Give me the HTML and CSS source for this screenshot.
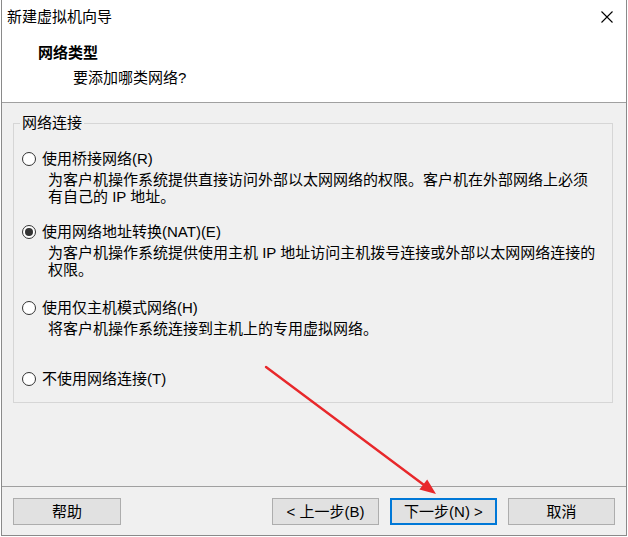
FILE: index.html
```html
<!DOCTYPE html>
<html lang="zh-CN">
<head>
<meta charset="utf-8">
<title>新建虚拟机向导</title>
<link rel="stylesheet" href="styles.css">
</head>
<body>
<div class="window">
  <div class="titlebar">
    <span class="title">新建虚拟机向导</span>
    <svg class="close" width="12" height="12" viewBox="0 0 12 12"><path d="M0.5 0.5 L11.5 11.5 M11.5 0.5 L0.5 11.5" stroke="#000" stroke-width="1.1" fill="none"/></svg>
  </div>
  <div class="header">
    <div class="h-title">网络类型</div>
    <div class="h-sub">要添加哪类网络?</div>
  </div>
  <div class="content">
    <fieldset class="group">
      <legend>网络连接</legend>
      <div class="option opt1">
        <div class="label"><span class="radio"></span>使用桥接网络(R)</div>
        <div class="desc">
          <div class="line">为客户机操作系统提供直接访问外部以太网网络的权限。客户机在外部网络上必须</div>
          <div class="line">有自己的 IP 地址。</div>
        </div>
      </div>
      <div class="option opt2">
        <div class="label"><span class="radio checked"></span>使用网络地址转换(NAT)(E)</div>
        <div class="desc">
          <div class="line">为客户机操作系统提供使用主机 IP 地址访问主机拨号连接或外部以太网网络连接的</div>
          <div class="line">权限。</div>
        </div>
      </div>
      <div class="option opt3">
        <div class="label"><span class="radio"></span>使用仅主机模式网络(H)</div>
        <div class="desc">
          <div class="line">将客户机操作系统连接到主机上的专用虚拟网络。</div>
        </div>
      </div>
      <div class="option opt4">
        <div class="label"><span class="radio"></span>不使用网络连接(T)</div>
      </div>
    </fieldset>
  </div>
  <div class="footer">
    <button class="btn help">帮助</button>
    <button class="btn">&lt; 上一步(B)</button>
    <button class="btn default">下一步(N) &gt;</button>
    <button class="btn">取消</button>
  </div>
</div>
<svg class="arrow" width="628" height="537" viewBox="0 0 628 537">
  <line x1="266" y1="367" x2="426" y2="486.5" stroke="#e8282b" stroke-width="2.4" stroke-linecap="round"/>
  <polygon points="436,494 419.4,489.6 427.2,479.4" fill="#e8282b"/>
</svg>
</body>
</html>
```
FILE: styles.css
```css
html, body {
  margin: 0;
  padding: 0;
  background: #ffffff;
  width: 628px;
  height: 537px;
  overflow: hidden;
  font-family: "Liberation Sans", "Noto Sans CJK SC", sans-serif;
  font-size: 15px;
  color: #000;
}

.window {
  margin-left: 1px;
  width: 626px;
  height: 536px;
  box-sizing: border-box;
  border: 1px solid #8a8a8a;
  border-top: none;
  display: flex;
  flex-direction: column;
  background: #f0f0f0;
}

.titlebar {
  height: 34px;
  flex: none;
  background: #fff;
  display: flex;
  align-items: center;
  justify-content: space-between;
  padding: 0 13px 0 5px;
}

.title {
  line-height: 20px;
}

.close {
  display: block;
}

.header {
  flex: none;
  height: 69px;
  box-sizing: border-box;
  background: #fff;
  border-bottom: 1px solid #a0a0a0;
  padding-top: 9px;
}

.h-title {
  font-weight: bold;
  padding-left: 36px;
  line-height: 20px;
}

.h-sub {
  padding-left: 71px;
  line-height: 20px;
  margin-top: 5px;
}

.content {
  flex: 1;
  padding: 11px 13px 0 11px;
}

.group {
  margin: 0;
  border: 1px solid #d6d6d6;
  padding: 17px 0 13px 6px;
}

.group legend {
  padding: 0 2px;
  line-height: 18px;
}

.option {
  margin-left: 2px;
}

.opt2 { margin-top: 17px; }
.opt3 { margin-top: 20px; }
.opt4 { margin-top: 32px; }

.label {
  display: flex;
  align-items: center;
  line-height: 20px;
  white-space: nowrap;
}

.radio {
  width: 14px;
  height: 14px;
  box-sizing: border-box;
  border: 1px solid #333;
  border-radius: 50%;
  background: #fff;
  margin-right: 6px;
  display: flex;
  align-items: center;
  justify-content: center;
  flex: none;
}

.radio.checked::after {
  content: "";
  width: 8px;
  height: 8px;
  border-radius: 50%;
  background: #333;
}

.desc {
  padding-left: 26px;
  margin-top: 2px;
}

.line {
  height: 17px;
  line-height: 17px;
  white-space: nowrap;
}

.footer {
  flex: none;
  height: 49px;
  box-sizing: border-box;
  border-top: 1px solid #a0a0a0;
  padding: 11px 11px 0 11px;
  display: flex;
  align-items: flex-start;
  gap: 11px;
}

.btn {
  width: 107px;
  height: 27px;
  box-sizing: border-box;
  background: #e1e1e1;
  border: 1px solid #adadad;
  font-family: inherit;
  font-size: 15px;
  color: #000;
  padding: 0;
  line-height: 20px;
  border-radius: 0;
}

.btn.help {
  width: 108px;
  margin-right: auto;
}

.btn.default {
  border: 2px solid #0078d7;
}

.arrow {
  position: absolute;
  left: 0;
  top: 0;
  pointer-events: none;
}
```
